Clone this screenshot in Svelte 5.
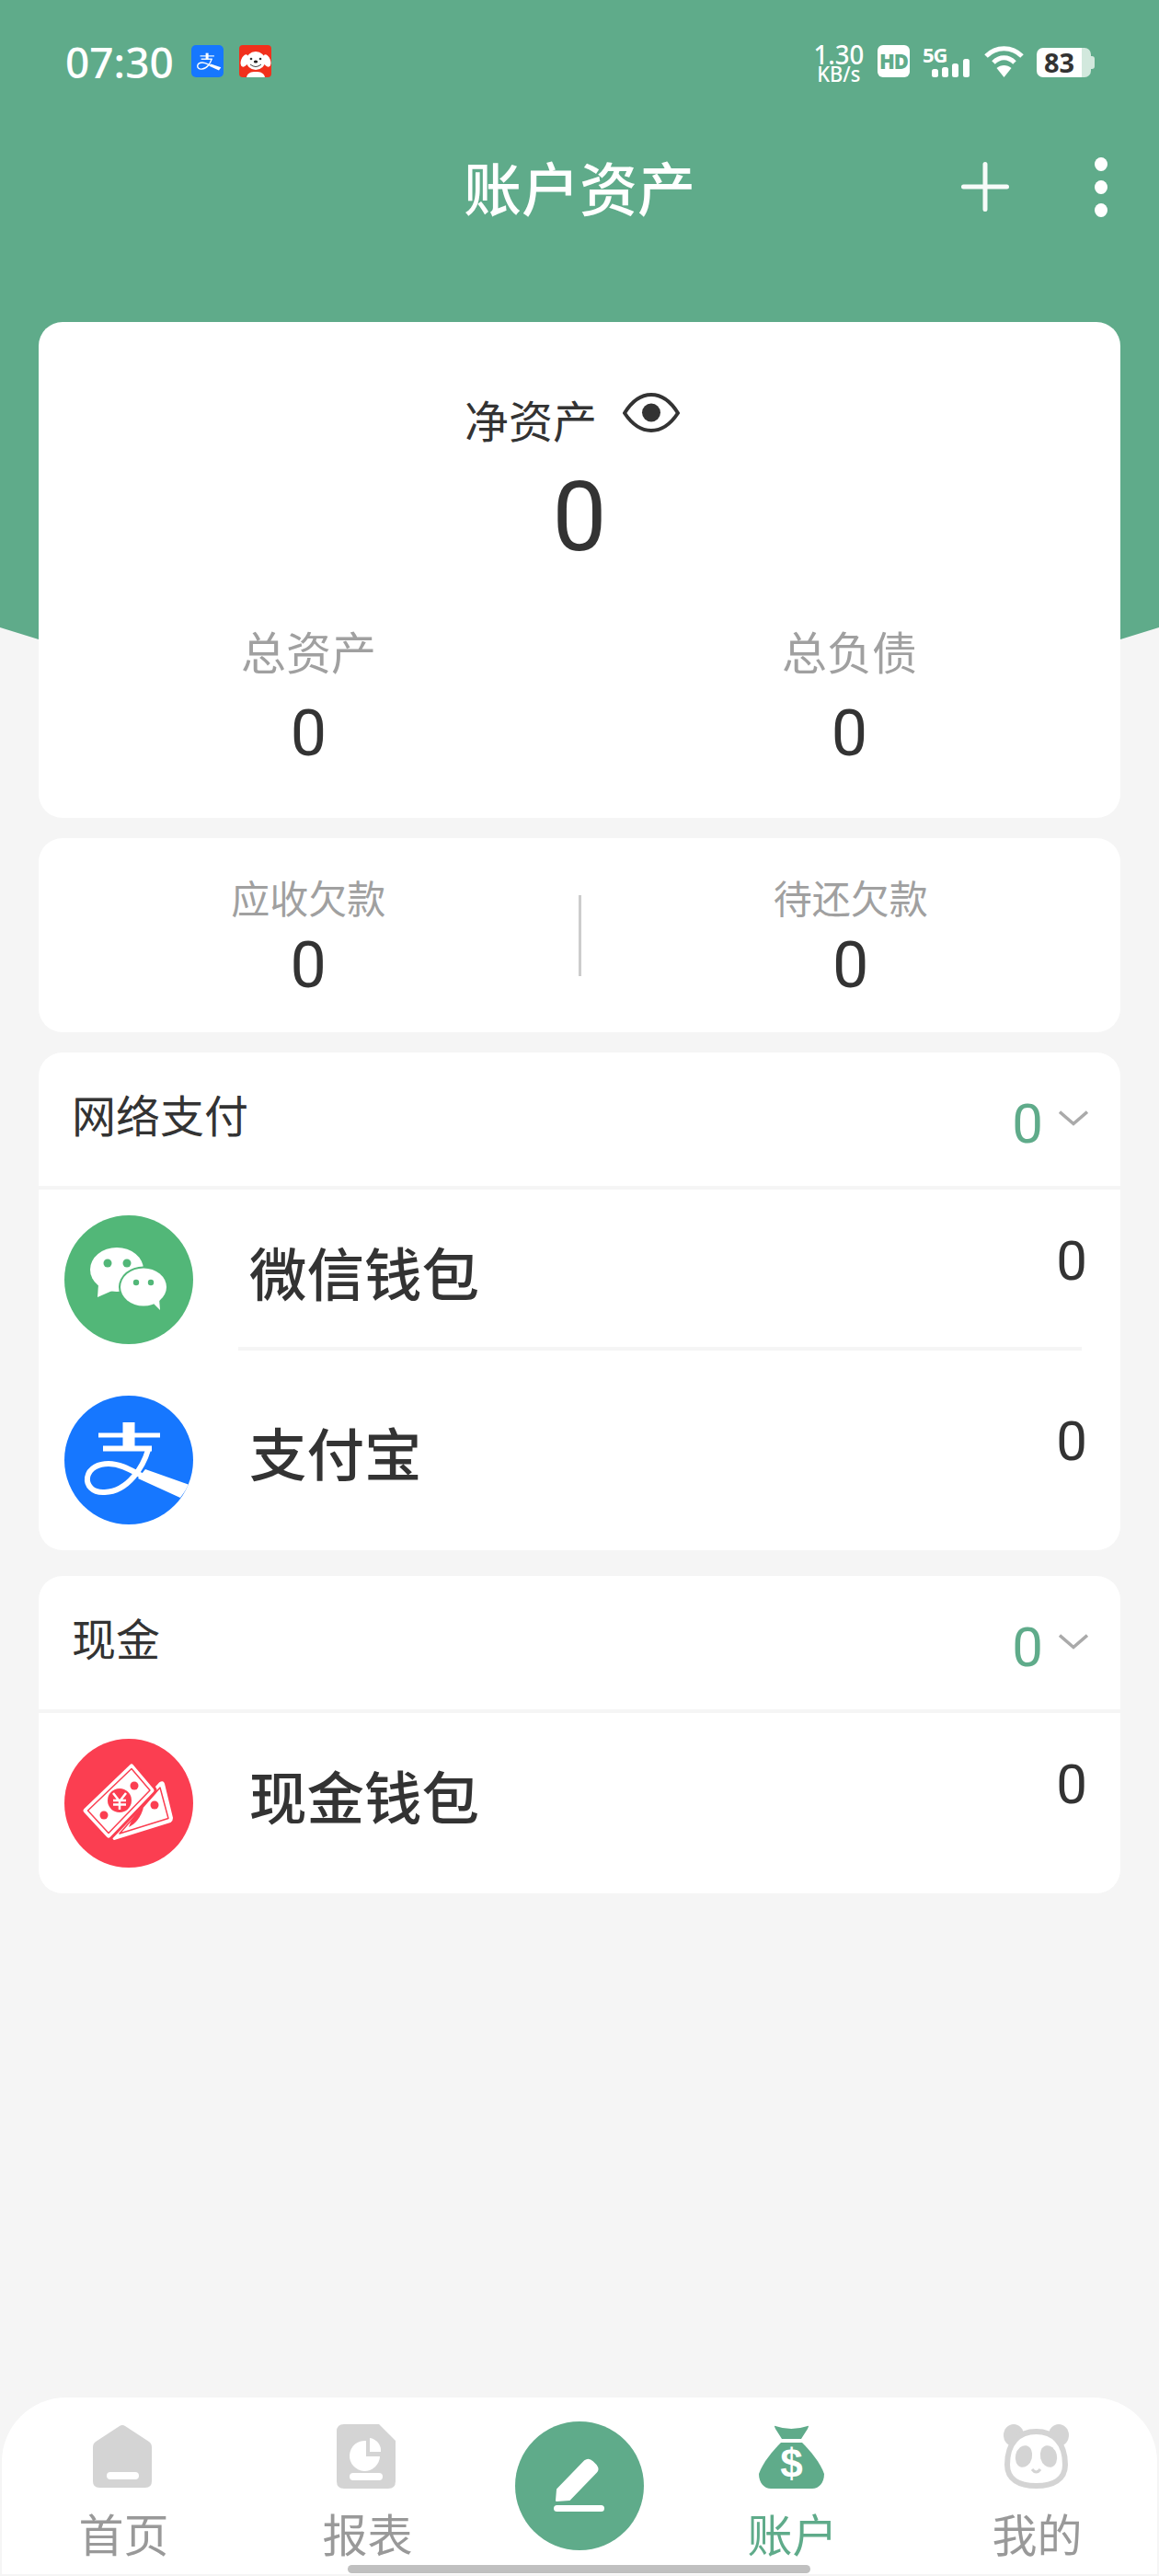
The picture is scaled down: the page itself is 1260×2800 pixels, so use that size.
<script>
  const tabs = [
    { key: 'home', label: '首页' },
    { key: 'report', label: '报表' },
    { key: 'add', label: '' },
    { key: 'account', label: '账户', active: true },
    { key: 'me', label: '我的' }
  ];
</script>

{#snippet alipayMark()}
  <path d="M37 43H104" stroke="#fff" stroke-width="5" fill="none" />
  <path d="M70 29V57" stroke="#fff" stroke-width="13" fill="none" />
  <path d="M42 57.500H95" stroke="#fff" stroke-width="6" fill="none" />
  <path d="M91 59C86 76 70 104 44 105C30 106 24 97 25 89C27 78 38 74 48 74C62 74 74 82 86 88" stroke="#fff" stroke-width="6" fill="none" />
  <path d="M88 80L136 97L126 111L80 90Z" fill="#fff" />
{/snippet}

<div class="page">
  <div class="hero"></div>

  <div class="status">
    <div class="status-left">
      <span class="time">07:30</span>
      <svg class="notif" viewBox="0 0 35 35" width="35" height="35">
        <rect width="35" height="35" rx="5" fill="#1677ff" />
        <g transform="translate(1 2) scale(.23)">{@render alipayMark()}</g>
      </svg>
      <svg class="notif" viewBox="0 0 35 35" width="35" height="35">
        <rect width="35" height="35" rx="4" fill="#f1301c" />
        <ellipse cx="18" cy="17" rx="10.500" ry="10" fill="#fff" />
        <ellipse cx="6" cy="17" rx="4" ry="7" fill="#fff" transform="rotate(20 6 17)" />
        <ellipse cx="30" cy="17" rx="4" ry="7" fill="#fff" transform="rotate(-20 30 17)" />
        <path d="M8 35C9 30 13 29 18 29S27 30 28 35Z" fill="#fff" />
        <circle cx="13" cy="15" r="1.300" fill="#333" />
        <circle cx="23" cy="15" r="1.300" fill="#333" />
        <ellipse cx="18" cy="18" rx="2.200" ry="1.500" fill="#222" />
        <path d="M12 21Q18 26 24 21" stroke="#444" stroke-width="1" fill="none" />
      </svg>
    </div>
    <div class="status-right">
      <div class="speed"><span>1.30</span><span class="unit">KB/s</span></div>
      <div class="hd">HD</div>
      <div class="net">
        <span class="five">5G</span>
        <svg viewBox="0 0 41 20" width="41" height="20" class="bars">
          <rect x="0" y="11" width="7" height="9" rx="2.500" fill="#fff" />
          <rect x="11" y="9" width="7" height="11" rx="2.500" fill="#fff" />
          <rect x="22" y="5" width="7" height="15" rx="2.500" fill="#fff" />
          <rect x="34" y="0" width="7" height="20" rx="2.500" fill="#fff" />
        </svg>
      </div>
      <svg viewBox="0 0 43 34" width="43" height="34">
        <path d="M2 11C13 0 30 0 41 11" stroke="#fff" stroke-width="5" fill="none" />
        <path d="M10 18C17 11 26 11 33 18" stroke="#fff" stroke-width="5" fill="none" />
        <path d="M13.500 24C18 20 25 20 29.500 24L21.500 34Z" fill="#fff" />
      </svg>
      <div class="battery">
        <div class="cell"><span>83</span></div>
        <div class="nub"></div>
      </div>
    </div>
  </div>

  <div class="titlebar">
    <h1>账户资产</h1>
    <svg class="plus" viewBox="0 0 52 54" width="52" height="54">
      <path d="M2.500 27H49.500M26 2.500V51.500" stroke="#fff" stroke-width="5" stroke-linecap="round" fill="none" opacity=".95" />
    </svg>
    <div class="dots"><i></i><i></i><i></i></div>
  </div>

  <main>
    <section class="card summary">
      <div class="net-label">
        <span>净资产</span>
        <svg viewBox="0 0 62 43" width="62" height="43">
          <path d="M2 22C10 9 20 2 31 2S52 9 60 22C52 34 42 41 31 41S10 34 2 22Z" stroke="#333" stroke-width="4" fill="none" />
          <circle cx="31" cy="21.500" r="10" fill="#333" />
        </svg>
      </div>
      <div class="net-value">0</div>
      <div class="stats">
        <div><div class="stat-label">总资产</div><div class="stat-value">0</div></div>
        <div><div class="stat-label">总负债</div><div class="stat-value">0</div></div>
      </div>
    </section>

    <section class="card debts">
      <div class="debt"><div class="debt-label">应收欠款</div><div class="stat-value">0</div></div>
      <div class="vline"></div>
      <div class="debt"><div class="debt-label">待还欠款</div><div class="stat-value">0</div></div>
    </section>

    <section class="card group">
      <div class="group-head">
        <span class="group-name">网络支付</span>
        <span class="group-total">0</span>
        <svg class="chev" viewBox="0 0 32 17" width="32" height="17"><path d="M1 1.500L16 14.500L31 1.500" stroke="#aaa" stroke-width="3.500" fill="none" /></svg>
      </div>
      <div class="row">
        <svg class="logo" viewBox="0 0 140 140" width="140" height="140">
          <circle cx="70" cy="70" r="70" fill="#52b778" />
          <ellipse cx="57" cy="59" rx="29" ry="24" fill="#fff" />
          <path d="M37 75L36 89L52 82Z" fill="#fff" />
          <circle cx="47" cy="52" r="4.500" fill="#52b778" />
          <circle cx="68" cy="52" r="4.500" fill="#52b778" />
          <ellipse cx="86" cy="78" rx="27" ry="22.500" fill="#52b778" />
          <ellipse cx="86" cy="78" rx="25" ry="20.500" fill="#fff" />
          <path d="M94 93L104 103L103 90Z" fill="#fff" />
          <circle cx="78" cy="73" r="3.200" fill="#52b778" />
          <circle cx="94" cy="73" r="3.200" fill="#52b778" />
        </svg>
        <div class="row-body lined">
          <span class="acc-name">微信钱包</span>
          <span class="acc-value">0</span>
        </div>
      </div>
      <div class="row">
        <svg class="logo" viewBox="0 0 140 140" width="140" height="140">
          <defs><clipPath id="ali"><circle cx="70" cy="70" r="70" /></clipPath></defs>
          <circle cx="70" cy="70" r="70" fill="#1677ff" />
          <g clip-path="url(#ali)">{@render alipayMark()}</g>
        </svg>
        <div class="row-body">
          <span class="acc-name">支付宝</span>
          <span class="acc-value">0</span>
        </div>
      </div>
    </section>

    <section class="card group cash">
      <div class="group-head">
        <span class="group-name">现金</span>
        <span class="group-total">0</span>
        <svg class="chev" viewBox="0 0 32 17" width="32" height="17"><path d="M1 1.500L16 14.500L31 1.500" stroke="#aaa" stroke-width="3.500" fill="none" /></svg>
      </div>
      <div class="row">
        <svg class="logo" viewBox="0 0 140 140" width="140" height="140">
          <circle cx="70" cy="70" r="70" fill="#fb3e51" />
          <path d="M52 106L104 48Q107 46 108 49L117 86Q117 89 115 90L54 109Z" fill="#fff" stroke="#fff" stroke-width="2" stroke-linejoin="round" />
          <path d="M60 103L104 53L113 86.500Z" fill="none" stroke="#fb3e51" stroke-width="1.500" stroke-linejoin="round" />
          <circle cx="98" cy="72" r="4.500" fill="#fb3e51" />
          <path d="M70 96C78 92 83 85 86 75C78 79 73 87 70 96Z" fill="#fb3e51" />
          <path d="M73 30L95 56L48 105L23 78Z" fill="#fb3e51" stroke="#fb3e51" stroke-width="11" stroke-linejoin="round" />
          <path d="M73 30L95 56L48 105L23 78Z" fill="#fff" stroke="#fff" stroke-width="5" stroke-linejoin="round" />
          <path d="M73 32.500L93 56L48 102.500L25.500 78Z" fill="none" stroke="#fb3e51" stroke-width="1.500" stroke-linejoin="round" />
          <circle cx="60" cy="67" r="13" fill="#fb3e51" />
          <path d="M53 59L60 68L67 59M60 68V77M53 67H67M53 71.500H67" stroke="#fff" stroke-width="2.500" fill="none" />
          <circle cx="76" cy="51" r="4.500" fill="#fb3e51" />
          <circle cx="43" cy="83" r="4.500" fill="#fb3e51" />
        </svg>
        <div class="row-body">
          <span class="acc-name">现金钱包</span>
          <span class="acc-value">0</span>
        </div>
      </div>
    </section>
  </main>

  <nav class="tabbar">
    {#each tabs as tab}
      <div class="tab" class:active={tab.active}>
        {#if tab.key === 'home'}
          <svg viewBox="0 0 64 70" width="64" height="70">
            <path d="M29 2L3 19Q0 21 0 25V62Q0 69 7 69H57Q64 69 64 62V25Q64 21 61 19L35 2Q32 0 29 2Z" fill="#d4d4d4" />
            <rect x="15" y="52" width="35" height="8" rx="4" fill="#fff" />
          </svg>
        {:else if tab.key === 'report'}
          <svg viewBox="0 0 64 70" width="64" height="70">
            <path d="M8 0H46L64 18V62Q64 70 56 70H8Q0 70 0 62V8Q0 0 8 0Z" fill="#d4d4d4" />
            <path d="M32 18A16.500 16.500 0 1 0 47 35H32Z" fill="#fff" />
            <path d="M36 15A14 14 0 0 1 48 30H36Z" fill="#fff" />
            <rect x="14" y="53" width="36" height="8" rx="4" fill="#fff" />
          </svg>
        {:else if tab.key === 'add'}
          <div class="add">
            <svg viewBox="0 0 140 140" width="140" height="140">
              <path d="M45 86L46 74L76 43Q80 40 84 44L88 48Q91 52 88 55L59 85Z" fill="#fff" stroke="#fff" stroke-width="2" stroke-linejoin="round" />
              <rect x="42" y="91" width="55" height="7" rx="3.500" fill="#fff" />
            </svg>
          </div>
        {:else if tab.key === 'account'}
          <svg viewBox="0 0 71 70" width="71" height="70">
            <path d="M18 2Q35 8 53 2Q55 1 53 5L46 16H25L18 5Q16 1 18 2Z" fill="#5fab8a" />
            <path d="M24 20H47C56 29 67 42 71 54C71 64 65 70 58 70H13C6 70 0 64 0 54C4 42 15 29 24 20Z" fill="#5fab8a" />
            <text x="35.500" y="58" text-anchor="middle" class="dollar">$</text>
          </svg>
        {:else}
          <svg viewBox="0 0 71 70" width="71" height="70">
            <ellipse cx="11" cy="12" rx="11" ry="12" fill="#d4d4d4" />
            <ellipse cx="60" cy="12" rx="11" ry="12" fill="#d4d4d4" />
            <path d="M35.500 8C54 8 67 20 67 44C67 60 54 67 35.500 67S4 60 4 44C4 20 17 8 35.500 8Z" fill="#fff" stroke="#d4d4d4" stroke-width="6" />
            <ellipse cx="22" cy="35" rx="9" ry="12" fill="#d4d4d4" transform="rotate(14 22 35)" />
            <ellipse cx="49" cy="35" rx="9" ry="12" fill="#d4d4d4" transform="rotate(-14 49 35)" />
            <path d="M31 49Q35.500 55 40 49" stroke="#d4d4d4" stroke-width="3" fill="none" />
          </svg>
        {/if}
        {#if tab.label}<span class="tab-label">{tab.label}</span>{/if}
      </div>
    {/each}
    <div class="home-bar"></div>
  </nav>
</div>

<style>
  :global(body) {
    margin: 0;
  }

  .page {
    position: relative;
    width: 1260px;
    height: 2800px;
    display: flex;
    flex-direction: column;
    background: #f5f5f5;
    color: #333;
    font-family: Roboto, "Noto Sans CJK SC", sans-serif;
    overflow: hidden;
  }

  .hero {
    position: absolute;
    inset: 0 0 auto 0;
    height: 800px;
    background: #5fab8a;
    clip-path: polygon(0 0, 100% 0, 100% 682px, 1218px 695px, 630px 780px, 42px 695px, 0 682px);
  }

  .status {
    position: relative;
    height: 100px;
    padding: 47px 70px 0 71px;
    box-sizing: border-box;
    display: flex;
    justify-content: space-between;
    color: #fff;
  }

  .status-left {
    display: flex;
    align-items: flex-start;
  }

  .time {
    font-family: "Noto Sans", sans-serif;
    font-size: 46px;
    font-weight: 500;
    line-height: 40px;
    margin-right: 19px;
  }

  .notif {
    margin: 2px 17px 0 0;
  }

  .status-right {
    display: flex;
    align-items: flex-start;
    font-family: "Noto Sans", sans-serif;
  }

  .speed {
    width: 52px;
    display: flex;
    flex-direction: column;
    align-items: center;
    font-size: 29px;
    font-weight: 500;
    line-height: 24px;
    margin-right: 16px;
  }

  .speed span {
    transform: scaleX(.95);
  }

  .unit {
    font-size: 23px;
    line-height: 18px;
  }

  .hd {
    width: 35px;
    height: 35px;
    margin-top: 2px;
    border-radius: 6px;
    background: #fff;
    color: #5fab8a;
    font-size: 22px;
    font-weight: 900;
    line-height: 35px;
    text-align: center;
    letter-spacing: -1px;
  }

  .net {
    width: 52px;
    height: 37px;
    margin: 0 15px 0 14px;
    position: relative;
  }

  .five {
    font-size: 22px;
    font-weight: 700;
    line-height: 18px;
    display: block;
    margin-top: 3px;
    letter-spacing: -1px;
  }

  .bars {
    position: absolute;
    right: 1px;
    top: 17px;
  }

  .status-right > svg {
    margin: 3px 14px 0 0;
  }

  .battery {
    display: flex;
    align-items: center;
    margin-top: 5px;
    height: 32px;
  }

  .cell {
    width: 59px;
    height: 32px;
    border-radius: 7px;
    background: linear-gradient(90deg, #fff 83%, #d2e8dd 83%);
    color: #333;
    font-size: 29px;
    font-weight: 700;
    line-height: 32px;
    padding-left: 8px;
    box-sizing: border-box;
  }

  .nub {
    width: 4px;
    height: 14px;
    border-radius: 0 3px 3px 0;
    background: #d2e8dd;
  }

  .titlebar {
    position: relative;
    height: 250px;
    display: flex;
    align-items: flex-start;
    color: #fff;
  }

  h1 {
    margin: 0;
    position: absolute;
    left: 0;
    right: 0;
    top: 69px;
    text-align: center;
    font-size: 63px;
    font-weight: 500;
    line-height: 78px;
  }

  .plus {
    position: absolute;
    left: 1045px;
    top: 76px;
  }

  .dots {
    position: absolute;
    left: 1190px;
    top: 71px;
    display: flex;
    flex-direction: column;
    gap: 10px;
  }

  .dots i {
    display: block;
    width: 14px;
    height: 15px;
    border-radius: 50%;
    background: #fff;
  }

  main {
    position: relative;
    padding: 0 42px;
    display: flex;
    flex-direction: column;
  }

  .card {
    background: #fff;
    border-radius: 26px;
    overflow: hidden;
  }

  .summary {
    height: 539px;
    text-align: center;
    padding-top: 78px;
    box-sizing: border-box;
  }

  .net-label {
    height: 64px;
    display: flex;
    align-items: center;
    justify-content: center;
    gap: 28px;
    font-size: 48px;
    line-height: 64px;
    margin-left: -16px;
  }

  .net-label svg {
    margin-top: -24px;
  }

  .net-value {
    margin-top: 11px;
    font-size: 105px;
    font-weight: 450;
    line-height: 120px;
  }

  .stats {
    margin-top: 59px;
    display: grid;
    grid-template-columns: 587px 589px;
  }

  .stat-label {
    font-size: 49px;
    line-height: 60px;
    color: #a0a0a0;
  }

  .stat-value {
    font-size: 70px;
    line-height: 84px;
    margin-top: 13px;
  }

  .debts {
    margin-top: 22px;
    height: 211px;
    display: grid;
    grid-template-columns: 1fr 3px 1fr;
    align-items: center;
    text-align: center;
  }

  .debt {
    padding-top: 9px;
  }

  .debt-label {
    font-size: 42px;
    line-height: 56px;
    color: #a0a0a0;
  }

  .debt .stat-value {
    margin-top: 0;
  }

  .vline {
    height: 88px;
    background: #ccc;
  }

  .group {
    margin-top: 22px;
  }

  .cash {
    margin-top: 28px;
  }

  .group-head {
    box-sizing: border-box;
    border-bottom: 4px solid #f5f5f5;
    height: 149px;
    padding: 0 35px 0 36px;
    display: flex;
    align-items: center;
  }

  .group-name {
    font-size: 48px;
    flex: 1;
    margin-bottom: 13px;
  }

  .group-total {
    font-size: 60px;
    font-weight: 450;
    color: #5fab8a;
    margin-right: 17px;
    margin-top: 9px;
  }

  .chev {
    margin-top: -3px;
  }

  .row {
    height: 196px;
    padding: 28px 42px 0 28px;
    box-sizing: border-box;
    display: flex;
    align-items: flex-start;
  }

  .logo {
    flex: none;
  }

  .row-body {
    flex: 1;
    height: 175px;
    box-sizing: border-box;
    margin: -28px 0 0 49px;
    padding-left: 12px;
    display: flex;
    justify-content: space-between;
    align-items: flex-start;
  }

  .lined {
    border-bottom: 4px solid #f5f5f5;
  }

  .acc-name {
    font-size: 62.500px;
    font-weight: 500;
    line-height: 189px;
  }

  .acc-value {
    font-size: 60px;
    line-height: 155px;
    margin-right: -6px;
  }

  .tabbar {
    position: relative;
    margin: auto 2px 2px;
    height: 192px;
    background: #fff;
    border-radius: 70px 70px 0 0;
    display: grid;
    grid-template-columns: 262px 268px 196px 264px 268px;
  }

  .tab {
    display: flex;
    flex-direction: column;
    align-items: center;
    padding-top: 29px;
    box-sizing: border-box;
  }

  .tab-label {
    font-size: 49px;
    line-height: 60px;
    color: #999;
    margin: 23px 0 0 3px;
  }

  .active .tab-label {
    color: #5fab8a;
  }

  .add {
    width: 140px;
    height: 140px;
    margin-top: -3px;
    border-radius: 50%;
    background: #5fab8a;
  }

  .dollar {
    fill: #fff;
    font-family: "Liberation Sans", sans-serif;
    font-size: 44px;
    font-weight: 700;
  }

  .home-bar {
    position: absolute;
    left: 376px;
    bottom: 1px;
    width: 503px;
    height: 9px;
    border-radius: 5px;
    background: #c0c0c0;
  }
</style>
